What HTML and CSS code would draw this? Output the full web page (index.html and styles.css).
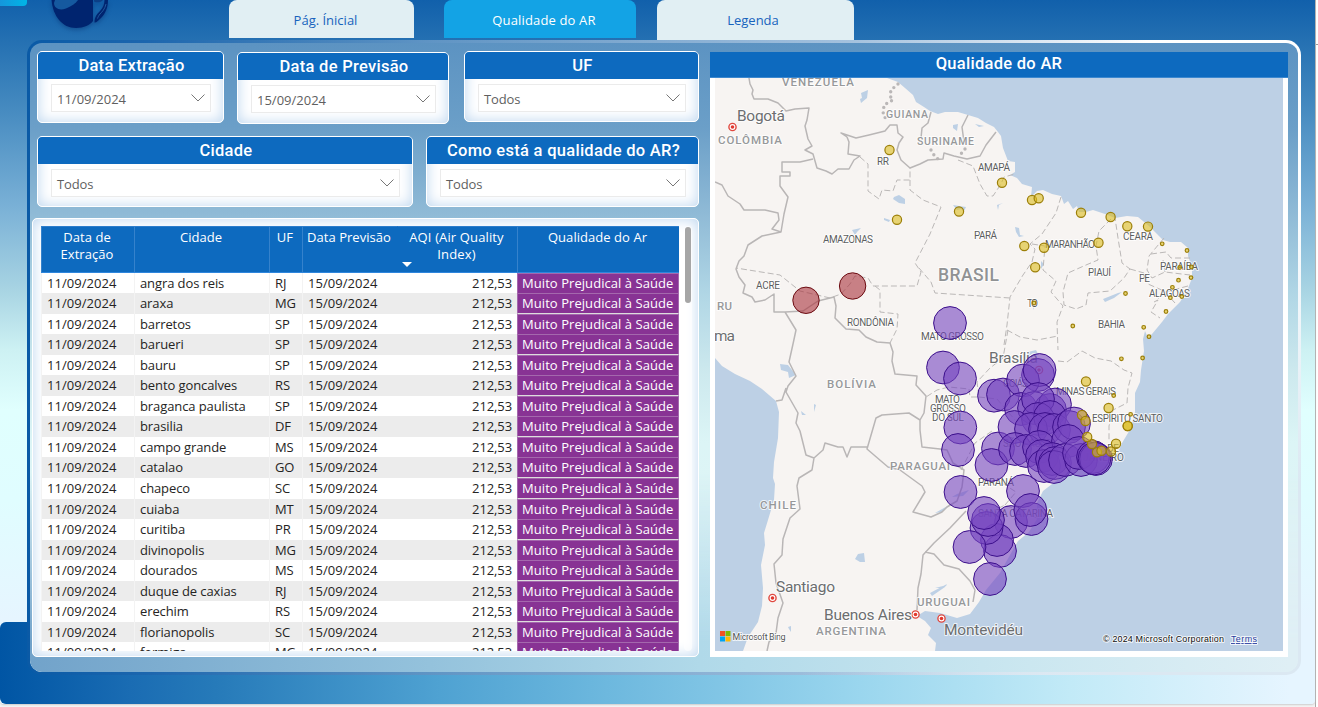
FILE: index.html
```html
<!DOCTYPE html>
<html lang="pt-BR">
<head>
<meta charset="utf-8">
<title>Qualidade do AR</title>
<link rel="stylesheet" href="styles.css">
</head>
<body>
<div class="report">
  <div class="corner"></div>
  <div class="footer-band"></div>
  <header class="top">
    <svg class="logo" width="60" height="34" viewBox="0 0 60 34">
      <path d="M.5 0C2 16 11 28 25 28C33 28 39 25 42 21L42 0Z" fill="#00246f"/>
      <path d="M3 3C3 8 8 11 15 8.500C21 6 25 3 27 0H4Z" fill="#15599f"/>
      <path d="M43 0H52C50 2.500 46 3 43 1.500Z" fill="#0c3f86"/>
      <path d="M57 0C57 8 54 14 50 18C47 21 45 23 43.500 22.500C43.500 17 46 14 49 11C52 8 53.500 4 53.500 0Z" fill="#00246f"/>
      <path d="M55 4C54 9 51 12 49 14C47.500 16 47 17 46.500 18.500" fill="none" stroke="#2a66a8" stroke-width=".8"/>
    </svg>
    <nav class="tabs">
      <a class="tab tab-home">Pág. Ínicial</a>
      <a class="tab tab-air">Qualidade do AR</a>
      <a class="tab tab-legend">Legenda</a>
    </nav>
  </header>
  <main class="panel">
    <section class="left">
      <div class="filters filters-a">
        <div class="filter f1"><h2>Data Extração</h2><div class="select">11/09/2024<svg class="chev" width="14" height="8" viewBox="0 0 14 8"><path d="M.5 .5L7 7L13.500 .5"/></svg></div></div>
        <div class="filter f2"><h2>Data de Previsão</h2><div class="select">15/09/2024<svg class="chev" width="14" height="8" viewBox="0 0 14 8"><path d="M.5 .5L7 7L13.500 .5"/></svg></div></div>
        <div class="filter f3"><h2>UF</h2><div class="select">Todos<svg class="chev" width="14" height="8" viewBox="0 0 14 8"><path d="M.5 .5L7 7L13.500 .5"/></svg></div></div>
      </div>
      <div class="filters filters-b">
        <div class="filter f4"><h2>Cidade</h2><div class="select">Todos<svg class="chev" width="14" height="8" viewBox="0 0 14 8"><path d="M.5 .5L7 7L13.500 .5"/></svg></div></div>
        <div class="filter f5"><h2>Como está a qualidade do AR?</h2><div class="select">Todos<svg class="chev" width="14" height="8" viewBox="0 0 14 8"><path d="M.5 .5L7 7L13.500 .5"/></svg></div></div>
      </div>
      <div class="table-card">
        <div class="table">
          <div class="row head">
            <div>Data de<br>Extração</div><div>Cidade</div><div>UF</div><div>Data Previsão</div>
            <div class="sorted">AQI (Air Quality<br>Index)</div><div>Qualidade do Ar</div>
          </div>
          <div id="rows"></div>
        </div>
        <div class="scroll"><div class="thumb"></div></div>
      </div>
    </section>
    <section class="map-card">
      <h2>Qualidade do AR</h2>
      <div class="map-body">
      <svg class="map" width="568" height="573" viewBox="715 78 568 573">
        <rect x="715" y="78" width="568" height="573" fill="#bdd0e5"/>
        <path class="land" d="M715 78H887L898 82 905 88 913 95 916 102 924 107 930 111 938 114 945 112 958 112 968 115 978 118 986 123 994 127 998 132 1001 136 1003 148 1008 161 1015 162 1015 172 1010 175 1017 178 1022 184 1032 187 1031 197 1037 191 1043 190 1052 194 1061 196 1064 204 1068 201 1073 209 1077 206 1079 212 1086 212 1093 210 1105 214 1115 218 1127 216 1138 217 1149 226 1157 234 1163 240 1170 242 1181 242 1188 248 1188 256 1192 267 1192 278 1187 291 1180 302 1168 314 1162 322 1152 334 1148 338 1145 331 1143 339 1144 351 1141 370 1140 382 1135 393 1135 412 1131 428 1122 443 1117 455 1108 460 1099 458 1090 462 1072 469 1056 481 1043 491 1037 503 1037 519 1029 532 1018 541 1010 555 1000 573 986 590 979 602 970 614 957 618 940 613 925 611 917 616 925 621 931 628 928 635 936 643 935 651H743L748 637 758 622 762 606 763 588 761 565 765 545 764 533 768 520 774 500 775 484 773 478 774 462 778 438 779 412 776 401 762 389 750 381 735 374 722 366 715 358Z"/>
        <path class="water" d="M861 93l7-3-1 8-6 5-1-4 2-1zM894 197l5-2 6 4v5l-6-1-6-4zM884 218l6 2-1 2-5-2zM953 205l6 1 7 1-2 4-3-2-4 1zM852 230l9-2-4 4-2 3zM997 205l6-2-4 2-1 5zM953 125l5-1-1 7-4-3zM975 124l9 2-5 1zM1015 227l4 1 1 7 4 1-5 1-3-5zM1041 261l3 3-3 5zM1103 299l15-6 4-1-8 6-9 4zM1033 302l2 3-2 5zM780 364l8 1 8 10-7 3-1-6-7-2zM801 411l5 4-4 0zM814 404l2 1-2 7zM858 554l6-1 1 9-5 0-5-3zM930 593l17-9-2 3-13 9zM935 588l12-3-4 3zM788 627l3-1v6l-2-3zM1028 352l8-2 2 4-5-1-7 5zM957 494l12-4-6 6-11 1zM951 504l-16 9 7-1z"/>
        <path class="border" d="M749 78L750 84 753 90 752 94 754 99 768 99 778 103 786 111 795 109 809 108 807 120 805 126 808 139 812 146 805 150 813 154 817 168 826 171 832 174 838 169 849 169 854 160 860 156 848 154 849 142 847 137 841 133 856 138 869 135 885 131 890 125 897 125 898 133 903 137 899 143 897 150 901 160 910 168 920 164 928 160 943 159 944 153 954 156 967 159 980 156 986 145 996 132M813 159L800 162H782V172H790V176H780V186L788 197 784 214 781 232 772 229 779 220 778 213 765 210H744L740 204 728 196 722 185 715 182M781 232L762 236 748 245 744 256 739 261 736 269 739 277 745 285 743 293 752 297 755 302 765 300 774 294V312H785L803 311 818 301 834 297 836 306 835 318 846 329 859 330 866 337 877 342 890 343 893 352 892 361 895 374 917 376 916 385 926 396 924 413 920 420 920 430 922 447 940 449 947 450 953 463 964 470 962 487 957 501 947 507 942 512 931 517 913 512 925 492 922 486 900 470 888 467 867 449 876 418 882 415 909 413 920 420M785 312L796 330 793 344 789 362 796 376 788 386 786 392 798 413 796 423 800 431 806 455 814 458 823 450 825 443 838 447 843 447 847 457 851 447 867 447M786 388L782 400 776 401M814 458L812 470 799 478 797 486 800 509 790 518 783 539 782 555 774 564 776 583 783 603 778 618 776 633 769 642 767 651M966 511L950 528 934 543 923 555 921 574 918 588 917 610M925 552L934 554 944 565 959 569 970 581 975 590 973 602M931 112L928 123 922 128 921 138M968 115L962 127 964 142"/>
        <path class="dots" d="M898 84L891 90 890 96 893 100 884 105 883 115 887 120M931 150L934 155 938 159M965 149L960 155"/>
        <path class="state" d="M860 157L868 164 868 191 879 199 882 190 893 191 897 180H910V168M910 180V190L923 200 941 207 930 234 915 263 921 272 917 286H873L868 278 855 276 850 284 841 294 830 298 800 291 780 275 736 268M875 286L880 290V312L898 314 897 329 890 343M919 268L931 282 935 293 1010 298M958 160L973 166 980 184 987 196 993 196 1001 184 1004 177 1015 174M1061 197L1056 213 1042 234 1030 244 1035 249 1032 262 1023 275 1010 297 1007 325 1004 345M1032 244L1045 246 1043 270 1056 281 1051 292 1063 306 1057 322 1058 350M1007 330L1020 337 1037 340 1058 336M1111 219L1099 231 1096 246 1098 260 1086 265 1068 273 1063 292 1064 305 1076 309 1086 305 1088 293 1110 291 1124 278 1130 269 1122 263 1118 238 1115 218M1130 269L1144 273 1148 284 1164 291 1175 303M1164 238L1149 256 1147 270 1152 278 1165 272 1190 275M1151 254L1166 252 1171 258 1191 258M1165 272L1163 260M1154 302L1158 300 1151 312 1160 318M1188 286L1165 292 1156 301M1058 361L1067 362 1082 351 1095 358 1111 361 1124 370 1132 373 1128 388 1127 403 1113 410 1109 426 1109 440M1008 330L1003 358 990 368 977 382 979 397H970L969 389 949 387 937 390 926 397M979 397L997 399 1015 420M961 470L975 443 992 431M1005 505L1016 492 1002 483M1037 518L1005 505 995 510"/>
        <g class="cap">
          <circle cx="732.500" cy="127"/><circle cx="772.500" cy="598"/><circle cx="915.500" cy="614.500"/><circle cx="941.500" cy="618.500"/><circle cx="1039" cy="370"/>
        </g>
        <g class="capdot">
          <circle cx="732.500" cy="127"/><circle cx="772.500" cy="598"/><circle cx="915.500" cy="614.500"/><circle cx="941.500" cy="618.500"/><circle cx="1039" cy="370"/>
        </g>
        <g class="country">
          <text x="782" y="86" textLength="72">VENEZUELA</text><text x="718" y="143.500" textLength="64">COLÔMBIA</text>
          <text x="886" y="118" textLength="42" class="sm">GUIANA</text><text x="917" y="145" textLength="57" class="sm">SURINAME</text>
          <text x="717" y="310" textLength="15">RU</text><text x="827" y="388" textLength="49">BOLÍVIA</text><text x="890" y="470" textLength="60">PARAGUAI</text>
          <text x="760" y="509" textLength="36">CHILE</text><text x="816" y="635" textLength="70">ARGENTINA</text><text x="917" y="606" textLength="53">URUGUAI</text>
          <text x="938" y="281" textLength="61" class="br">BRASIL</text>
        </g>
        <g class="city">
          <text x="737" y="121" textLength="48">Bogotá</text><text x="714" y="341" textLength="21">ma</text><text x="989" y="363" textLength="49">Brasília</text>
          <text x="776" y="592" textLength="59">Santiago</text><text x="824" y="620" textLength="88">Buenos Aires</text><text x="944" y="635" textLength="79">Montevidéu</text>
        </g>
        <g class="st">
          <text x="877" y="165" textLength="12">RR</text><text x="978" y="171" textLength="32">AMAPÁ</text><text x="823" y="243" textLength="50">AMAZONAS</text><text x="974" y="239" textLength="23">PARÁ</text>
          <text x="756" y="288.500" textLength="24">ACRE</text><text x="847" y="325.500" textLength="47">RONDÔNIA</text><text x="921" y="340" textLength="63">MATO GROSSO</text><text x="1045" y="247.500" textLength="50">MARANHÃO</text>
          <text x="1123" y="239.500" textLength="30">CEARÁ</text><text x="1088" y="276" textLength="23">PIAUÍ</text><text x="1139" y="282" textLength="11">PE</text><text x="1160" y="270" textLength="38">PARAÍBA</text>
          <text x="1149" y="297" textLength="41">ALAGOAS</text><text x="1098" y="328" textLength="27">BAHIA</text><text x="1027" y="307" textLength="11">TO</text><text x="935" y="402.500" textLength="25">MATO</text>
          <text x="930" y="412" textLength="36">GROSSO</text><text x="932" y="421" textLength="32">DO SUL</text><text x="1056" y="395" textLength="60">MINAS GERAIS</text><text x="1092" y="422" textLength="71">ESPÍRITO SANTO</text>
          <text x="1003" y="387" textLength="25">GOIÁS</text><text x="978" y="486" textLength="36">PARANÁ</text><text x="978" y="516.500" textLength="75">SANTA CATARINA</text><text x="1091" y="452" textLength="28">RIO DE</text><text x="1083" y="461" textLength="41">JANEIRO</text><text x="1003" y="447" textLength="49">SÃO PAULO</text>
        </g>
        <g id="bubbles"></g>
        <g class="bing">
          <path fill="#f25022" d="M720 631h5v5h-5z"/><path fill="#7fba00" d="M725.500 631h5v5h-5z"/><path fill="#00a4ef" d="M720 636.500h5v5h-5z"/><path fill="#ffb900" d="M725.500 636.500h5v5h-5z"/>
          <text x="732.500" y="639.500" textLength="53">Microsoft Bing</text>
        </g>
        <g class="legal"><text x="1103" y="642" textLength="121">© 2024 Microsoft Corporation</text><text x="1231" y="642" textLength="26" class="terms">Terms</text></g>
      </svg>
      </div>
    </section>
  </main>
</div>
<div class="edge"></div>
<script src="app.js"></script>
</body>
</html>
```
FILE: app.js
```js
const cities = [
  ["angra dos reis", "RJ"], ["araxa", "MG"], ["barretos", "SP"], ["barueri", "SP"], ["bauru", "SP"],
  ["bento goncalves", "RS"], ["braganca paulista", "SP"], ["brasilia", "DF"], ["campo grande", "MS"],
  ["catalao", "GO"], ["chapeco", "SC"], ["cuiaba", "MT"], ["curitiba", "PR"], ["divinopolis", "MG"],
  ["dourados", "MS"], ["duque de caxias", "RJ"], ["erechim", "RS"], ["florianopolis", "SC"], ["formiga", "MG"]
];
document.getElementById("rows").innerHTML = cities.map(([city, uf]) =>
  `<div class="row"><div class="date">11/09/2024</div><div>${city}</div><div>${uf}</div><div class="date">15/09/2024</div><div class="num">212,53</div><div class="level">Muito Prejudical à Saúde</div></div>`
).join("");

const groups = [
  { cls: "severe", r: 16.4, pts: [[950,323],[943,367.5],[960,378.5],[960.3,427.5],[958,450],[994,395.7],[1003,394.5],[998,448.5],[991.5,465],[960.5,492],
    [1038,375],[1023,380.5],[1039.5,370],[1021,409],[1034,408],[1050,410],[1055,404.5],[1038,399],[1038,419],[1050,417],[1014.5,427],[1031,429],[1045,429],
    [1054,430],[1069,427],[1074,423.5],[1015,449],[1026,451],[1039,447],[1042,456],[1068,441],[1044,466],[1052,459],[1055,463],[1054,467],[1065,460],
    [1081,460],[1079,453],[1093,457],[1096,459],[1094.5,458.5],[1023,491],[1011,522],[1031.5,519],[1030.3,510],[1000,551],[997,540],[986.5,528],[988,520],[984,513],[969.5,547],[990,579]] },
  { cls: "bad", r: 13.2, pts: [[806,300.3],[852.6,286]] },
  { cls: "mid", r: 4.6, pts: [[889.5,150],[897,219.7],[959,211.5],[1002,182.7],[1032,200],[1038.7,198.2],[1081,212.7],[1110.6,217],[1127.3,226.2],[1148,226.6],
    [1098.5,242.7],[1024.3,246],[1044,247.7],[1035.2,267.3],[1086,381.5],[1108.6,408],[1127.7,426],[1127.7,426],[1116,443.8],[1111,451.5],[1097,452.3],[1101.5,450.7],
    [1092,444],[1087.2,437],[1082,415],[1085.5,421]] },
  { cls: "mid", r: 1.8, pts: [[1162.2,243.8],[1187,250.5],[1179.7,267.5],[1191.4,267],[1191,277.6],[1178.5,280.2],[1172.4,287.3],[1170.4,297.7],[1181.8,296.6],
    [1166,311.5],[1143.7,327.3],[1149,336.7],[1125.5,293.5],[1072.8,326],[1034,303],[1121.4,358.8],[1142.6,358],[1113.7,395.5],[1130.6,414.3]] }
];
document.getElementById("bubbles").innerHTML = groups.map(g =>
  g.pts.map(([x, y]) => `<circle class="${g.cls}" cx="${x}" cy="${y}" r="${g.r}"/>`).join("")
).join("");
```
FILE: styles.css
```css
* { box-sizing: border-box; }
body { margin: 0; width: 1318px; height: 707px; overflow: hidden; display: flex; background: #f4f4f4; font-family: "Open Sans", "Noto Sans", sans-serif; }
h2 { margin: 0; padding-left: 2px; color: #fff; background: #0d6abf; text-align: center; font: 500 16.5px/27px Roboto, sans-serif; letter-spacing: .28px; }
.report { position: relative; width: 1315px; height: 704px; border-radius: 0 0 4px 4px; overflow: hidden; box-shadow: 0 1px 2px #ccc;
  background: linear-gradient(#1160ab 0, #2470b2 40px, #4187be 100px, #79b0d6 205px, #a8d4e3 290px, #cdf1f3 350px, #e0fffe 410px, #e0fdff 500px, #e6f5ff 620px, #e6f5ff 704px); }
.edge { width: 3px; height: 707px; border-left: 1px solid #aaa; background: linear-gradient(#fff 44px, #999 44px, #999 45px, #fff 45px); }
.corner { position: absolute; left: 0; top: 0; width: 27px; height: 6px; background: linear-gradient(90deg, #1596dc, #00b5e6); border-radius: 0 0 4px 0; }
.footer-band { position: absolute; left: 0; bottom: 0; width: 100%; height: 82px; border-radius: 6px;
  background: linear-gradient(90deg, #0055a4 0, #1a6cb3 130px, #267ab9 215px, #4fa2d2 440px, #6ab6dd 590px, #9ad6ee 860px, #c2eaf7 1070px, #e6f5ff 1290px); }
.top { position: relative; height: 40px; display: flex; padding-left: 51px; }
.logo { filter: drop-shadow(0 2px 2px rgba(0,30,90,.35)); flex: none; }
.tabs { display: flex; margin-left: 118px; align-items: flex-start; }
.tab { height: 38px; line-height: 40px; text-align: center; font-size: 13px; color: #1763bd; background: #e1eff3; border-radius: 8px 8px 0 0; }
.tab-home { width: 185px; padding-left: 8px; }
.tab-air { width: 192px; margin-left: 30px; padding-left: 8px; background: #13a3e5; color: #fff; letter-spacing: .15px; }
.tab-legend { width: 197px; margin-left: 21px; height: 40px; padding-right: 5px; }
.panel { position: relative; margin-left: 27px; width: 1274px; height: 635px; border: 3px solid transparent; border-radius: 15px; display: flex;
  background:
    linear-gradient(#5c93c2 0, #6b9fc8 85px, #8fbad6 170px, #b0d6e5 250px, #cde9ee 330px, #dcf5f6 400px, #def4f6 470px, #dfeff5 632px) padding-box,
    radial-gradient(ellipse 500px 480px at 100% 100%, #dbe8f2 40%, transparent) border-box,
    linear-gradient(90deg, #0a5aa6 0, #1c66ae 120px, #5f94c4 400px, #a5c2de 830px, #fff 1120px) border-box; }
.panel::before { content: ""; position: absolute; inset: 430px 0 0 0; border-radius: 0 0 12px 12px;
  background: linear-gradient(90deg, #72a3ca, #94c2dc 400px, #b0d9e9 670px, #cbe7f0 1000px, #dfeff5 1260px);
  -webkit-mask-image: linear-gradient(transparent, #000 85%); mask-image: linear-gradient(transparent, #000 85%); }
.left { position: relative; width: 669px; padding: 8px 0 0 2px; }
.filters { display: flex; align-items: flex-start; padding-left: 5px; }
.filters-a { height: 85px; }
.filters-b { height: 82px; }
.filter { height: 72px; border: 1px solid #fff; border-radius: 5px; overflow: hidden; background: #fff; box-shadow: inset 0 0 14px #bdd6ef; }
.f1 { width: 187px; }
.f2 { width: 212px; margin: 1px 0 0 13px; }
.f3 { width: 235px; height: 71px; margin-left: 15px; }
.f4 { width: 376px; height: 71px; }
.f5 { width: 273px; height: 71px; margin-left: 13px; }
.select { display: flex; justify-content: space-between; align-items: center; height: 28px; margin: 5px 12px 0 13px; padding: 2px 5px 0 5px; border: 1px solid #ebebeb; background: rgba(255,255,255,.8); color: #5f5f5f; font-size: 13px; letter-spacing: 0; }
.f3 .select, .f4 .select, .f5 .select { letter-spacing: -.15px; }
.chev { fill: none; stroke: #777; stroke-width: 1; margin-top: -3px; }
.table-card { width: 667px; height: 439px; border: 1px solid #fff; border-radius: 5px; background: #fff; box-shadow: inset 0 0 14px #bdd6ef; display: flex; padding: 7px 0 5px 8px; }
.table { width: 638px; height: 425px; overflow: hidden; color: #252423; font-size: 13px; letter-spacing: -.1px; }
.row { display: grid; grid-template-columns: 93px 135px 33px 95px 120px 162px; height: 20.55px; line-height: 20.5px; background: #fff; white-space: nowrap; }
.row > div { padding-left: 5px; border-left: 1px solid #f3f3f3; }
.row > .date { letter-spacing: .05px; }
.row:nth-child(even) { background: #ececec; }
.row > .num { text-align: right; padding-right: 5px; border-left-color: transparent; }
.row > .level { padding-left: 4px; background: #883394; color: #fff; border: 1px solid #a468ad; border-bottom-color: #ddd; line-height: 19px; letter-spacing: .06px; }
.row.head { height: 46.500px; color: #fff; background: #0d6abf; line-height: 17px; border-bottom: 1px solid #2e86dd; letter-spacing: .05px; }
.row.head > div { padding: 2px 2px 0 0; text-align: center; border-left: 1px solid #3582cc; border-top: 1px solid #2c7dcc; }
.row.head > .sorted { position: relative; border-left-color: #0d6abf; letter-spacing: .13px; }
.sorted::after { content: ""; position: absolute; left: 4px; top: 35px; border: 5px solid transparent; border-top-color: #fff; border-bottom: 0; }
.scroll { width: 8px; margin-left: 5px; border-radius: 4px; background: rgba(255,255,255,.6); }
.thumb { width: 6px; height: 76px; margin: 1px 0 0 1px; border-radius: 3px; background: #a6a6a6; }
.map-card { position: relative; margin: 9px 0 0 11px; width: 578px; height: 605px; background: #fff; }
.map-card h2 { height: 26px; line-height: 23px; border-bottom: 1px solid #3c88cf; padding-left: 0; }
.map-body { padding-left: 5px; }
.map { display: block; font-family: Roboto, sans-serif; }
.land { fill: #f7f4f2; }
.water { fill: #bdd0e5; }
.border { fill: none; stroke: #b9b6b6; stroke-width: 1.5; stroke-linejoin: round; }
.dots { fill: none; stroke: #bab7b7; stroke-width: 3.4; stroke-linecap: round; stroke-dasharray: 0 5.5; }
.state { fill: none; stroke: #bbb8b7; stroke-width: 1; stroke-dasharray: 6 3; }
.cap circle { r: 3.6px; fill: #fff; stroke: #e0483f; stroke-width: 1.4; }
.capdot circle { r: 1.8px; fill: #e0382e; }
.map text { paint-order: stroke; stroke: rgba(255,255,255,.75); stroke-width: 2px; stroke-linejoin: round; }
.country { font-size: 11.5px; font-weight: 500; fill: #96989a; }
.country .sm { font-size: 10.500px; }
.country .br { font-size: 17.500px; fill: #909294; }
.city { font-size: 15.5px; fill: #6c6e70; }
.st { font-size: 10px; fill: #5c5e60; }
.severe { fill: #7445c0; fill-opacity: .6; stroke: #3c0f8c; stroke-width: 1; }
.bad { fill: #a8323c; fill-opacity: .6; stroke: #6c0c12; stroke-width: 1; }
.mid { fill: #dcbc1e; fill-opacity: .6; stroke: #9c7f08; stroke-width: 1.2; }
.bing { font-size: 9px; fill: #555; }
.legal { font: 9px "Liberation Sans", sans-serif; fill: #111; }
.terms { fill: #2b3fa0; text-decoration: underline; }
```
